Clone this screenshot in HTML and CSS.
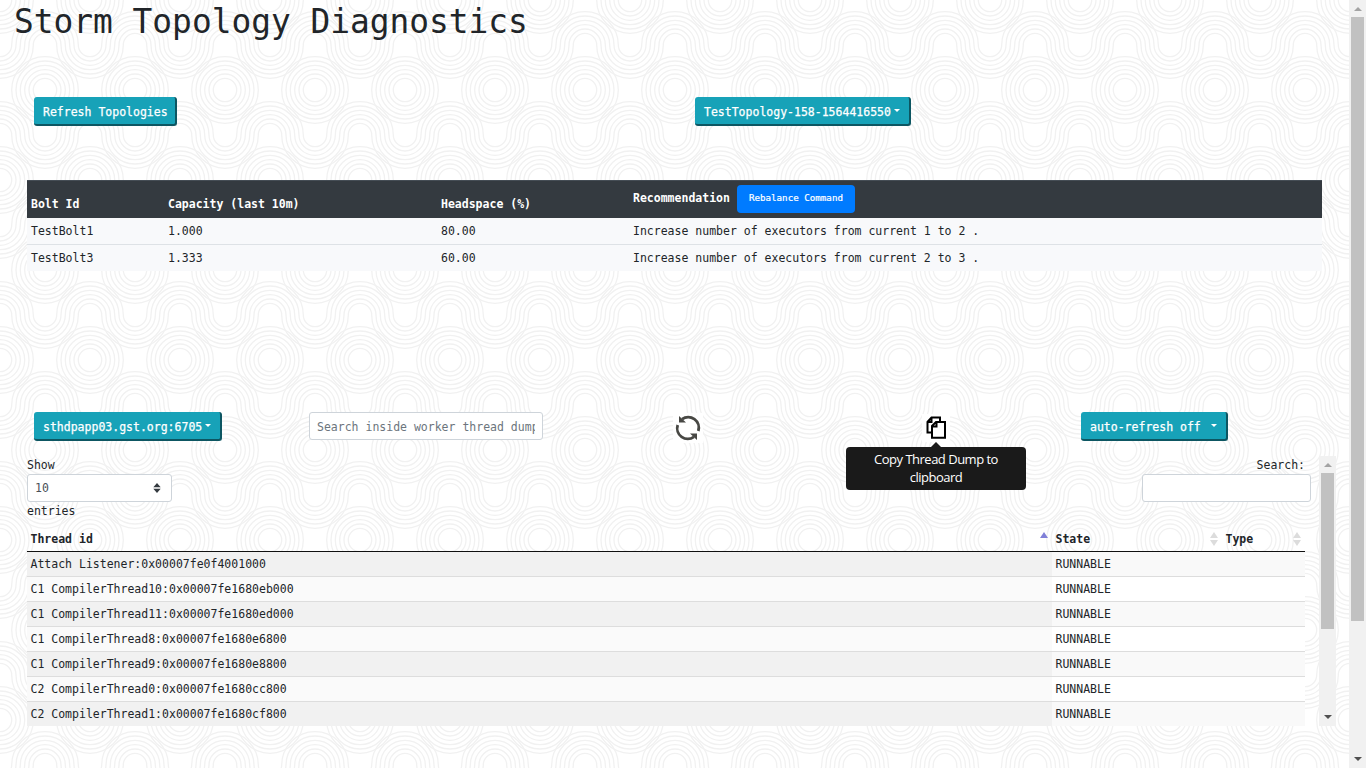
FILE: index.html
```html
<!DOCTYPE html>
<html lang="en">
<head>
<meta charset="utf-8">
<title>Storm Topology Diagnostics</title>
<link rel="stylesheet" href="styles.css">
</head>
<body>
<div class="page">
  <main class="content">
    <h1 class="title">Storm Topology Diagnostics</h1>
    <div class="topbar">
      <button class="btn-info refresh">Refresh Topologies</button>
      <button class="btn-info topology">TestTopology-158-1564416550<i class="caret"></i></button>
    </div>
    <table class="bolts">
      <colgroup><col class="b1"><col class="b2"><col class="b3"><col></colgroup>
      <thead><tr><th>Bolt Id</th><th>Capacity (last 10m)</th><th>Headspace (%)</th><th class="rec"><div class="rec-in"><span>Recommendation</span><button class="btn-primary">Rebalance Command</button></div></th></tr></thead>
      <tbody>
        <tr><td>TestBolt1</td><td>1.000</td><td>80.00</td><td>Increase number of executors from current 1 to 2 .</td></tr>
        <tr><td>TestBolt3</td><td>1.333</td><td>60.00</td><td>Increase number of executors from current 2 to 3 .</td></tr>
      </tbody>
    </table>
    <div class="toolbar">
      <div class="c1"><button class="btn-info worker">sthdpapp03.gst.org:6705<i class="caret"></i></button></div>
      <div class="c2"><div class="field search-dump"><span>Search inside worker thread dump</span></div></div>
      <div class="c3"><svg class="icon" width="30" height="30" viewBox="0 0 30 30"><rect width="30" height="30" fill="#fff"/><g fill="none" stroke="#484844" stroke-width="2.8"><path d="M9 6.2A10.6 10.6 0 0 1 25.3 18"/><path d="M21 23.8A10.6 10.6 0 0 1 4.7 12"/></g><path d="M6 3V9.6H13zM24 27V20.4H17z" fill="#484844"/></svg></div>
      <div class="c4"><svg class="icon" width="28" height="28" viewBox="0 0 28 28"><rect width="28" height="28" fill="#fff"/><g fill="#fff" stroke="#000" stroke-width="2"><path d="M9.5 3.5H18V18.5H5.5V8zM9.5 3.5V8H5.5"/><path d="M14 8H23V23.8H10V12zM14.5 8V12.5H10"/></g></svg>
        <div class="tooltip">Copy Thread Dump to clipboard</div></div>
      <div class="c5"><button class="btn-info auto">auto-refresh off<i class="caret"></i></button></div>
    </div>
    <div class="pane">
      <div class="pane-body">
        <div class="controls">
          <div class="length"><span>Show</span><div class="field select"><span>10</span><svg width="8" height="10" viewBox="0 0 8 10"><path d="M4 0L7.7 4.2H.3zM4 10L.3 5.8H7.7z" fill="#343a40"/></svg></div><span>entries</span></div>
          <div class="filter"><span>Search:</span><div class="field"></div></div>
        </div>
        <table class="threads">
          <colgroup><col class="t1"><col class="t2"><col></colgroup>
          <thead><tr><th><div class="h">Thread id<i class="sort asc"></i></div></th><th><div class="h">State<i class="sort"></i></div></th><th><div class="h">Type<i class="sort"></i></div></th></tr></thead>
          <tbody>
            <tr><td>Attach Listener:0x00007fe0f4001000</td><td>RUNNABLE</td><td></td></tr>
            <tr><td>C1 CompilerThread10:0x00007fe1680eb000</td><td>RUNNABLE</td><td></td></tr>
            <tr><td>C1 CompilerThread11:0x00007fe1680ed000</td><td>RUNNABLE</td><td></td></tr>
            <tr><td>C1 CompilerThread8:0x00007fe1680e6800</td><td>RUNNABLE</td><td></td></tr>
            <tr><td>C1 CompilerThread9:0x00007fe1680e8800</td><td>RUNNABLE</td><td></td></tr>
            <tr><td>C2 CompilerThread0:0x00007fe1680cc800</td><td>RUNNABLE</td><td></td></tr>
            <tr><td>C2 CompilerThread1:0x00007fe1680cf800</td><td>RUNNABLE</td><td></td></tr>
          </tbody>
        </table>
      </div>
      <div class="scroll"><i class="up"></i><div class="thumb inner"></div><i class="down"></i></div>
    </div>
  </main>
  <div class="scroll"><i class="up"></i><div class="thumb outer"></div><i class="down"></i></div>
</div>
</body>
</html>
```
FILE: styles.css
```css
*{box-sizing:border-box}
body{margin:0;overflow:hidden;color:#212529;font:11.51px/19px "DejaVu Sans Mono",monospace;
  background:#fff url("data:image/svg+xml,%3Csvg xmlns='http://www.w3.org/2000/svg' xmlns:xlink='http://www.w3.org/1999/xlink' width='90' height='180' fill='none' stroke='%23f1f1f1' stroke-width='1.3'%3E%3Cdefs%3E%3Cg id='c'%3E%3Ccircle r='11.7'/%3E%3Ccircle r='16'/%3E%3Ccircle r='20.3'/%3E%3Ccircle r='24.7'/%3E%3Ccircle r='29'/%3E%3Ccircle r='33.3'/%3E%3C/g%3E%3Cg id='a'%3E%3Cpath d='M-11.7 0a11.7 11.7 0 0 1 23.4 0M-16 0a16 16 0 0 1 32 0M-20.3 0a20.3 20.3 0 0 1 40.6 0M-24.7 0a24.7 24.7 0 0 1 49.4 0M-29 0a29 29 0 0 1 58 0M-33.3 0a33.3 33.3 0 0 1 66.6 0'/%3E%3C/g%3E%3Cg id='u'%3E%3Cuse xlink:href='%23a' transform='scale(1,-1)'/%3E%3C/g%3E%3C/defs%3E%3Cuse xlink:href='%23c'/%3E%3Cuse xlink:href='%23c' x='90'/%3E%3Cuse xlink:href='%23c' y='180'/%3E%3Cuse xlink:href='%23c' x='90' y='180'/%3E%3Cuse xlink:href='%23c' x='45' y='90'/%3E%3Cuse xlink:href='%23a' x='45' y='45'/%3E%3Cuse xlink:href='%23u' y='45'/%3E%3Cuse xlink:href='%23u' x='90' y='45'/%3E%3Cuse xlink:href='%23u' x='45' y='135'/%3E%3Cuse xlink:href='%23a' y='135'/%3E%3Cuse xlink:href='%23a' x='90' y='135'/%3E%3C/svg%3E")}
.page{display:flex;width:1366px;height:768px}
.content{width:1349px;height:768px}
.title{margin:0;padding-left:14px;height:97px;font-size:32.85px;line-height:45px;font-weight:400;white-space:pre}
button{font:inherit;margin:0;border:0}
.btn-info{display:flex;align-items:center;height:29px;padding:3px 0 0 9px;border-radius:3px;background:#17a2b8;color:#fff;border-right:2px solid #0d5662;border-bottom:2px solid #0d5662;font-weight:400;white-space:pre;-webkit-text-stroke:.25px #fff}
.caret{width:0;margin:-3px 0 0 3px;border:3.5px solid transparent;border-top-color:#fff;border-bottom:0}
.topbar{display:flex;height:83px;padding-left:34px}
.refresh{width:143px}
.topology{width:216px;margin-left:518px}
table{border-collapse:separate;border-spacing:0;table-layout:fixed}
th{text-align:left;font-weight:700}
.bolts{width:1295px;margin-left:27px}
.b1{width:137px}.b2{width:273px}.b3{width:192px}
.bolts th{height:38px;padding:10px 4px 0;background:#343a40;color:#fff;border-top:1px solid #454d55}
.bolts th.rec{padding-top:0}
.rec-in{display:flex;gap:7px;height:29px;line-height:27px}
.btn-primary{width:118px;height:28px;border-radius:4px;background:#007bff;color:#fff;font-size:9.2px;font-weight:400;-webkit-text-stroke:.2px #fff;line-height:25px;padding:0 0 3px;white-space:nowrap}
.bolts td{height:26px;padding:0 4px;background:#f8f9fb;line-height:26px}
.bolts tr+tr td{height:27px;border-top:1px solid #dee2e6}
.toolbar{display:flex;height:44px;margin-top:141px;padding-left:34px}
.c1{width:275px}.c2{width:364px}.c3{width:249px}.c4{width:159px;position:relative}
.worker{width:188px}.auto{width:147px}
.auto .caret{margin-left:10px}
.field{height:28px;border:1px solid #ced4da;border-radius:3px;background:#fff;color:#495057}
.search-dump{width:234px;padding:0 7px;line-height:28px;color:#6c757d}
.search-dump span{display:block;overflow:hidden;white-space:nowrap}
.icon{display:block}
.c3 .icon{margin-top:1px}
.c4 .icon{margin-top:2px}
.tooltip{position:absolute;left:-76px;top:35px;width:180px;height:43px;padding:3px 22px 0;border-radius:4px;background:#1a1a1a;color:#fff;font:13px/18px "Open Sans",sans-serif;letter-spacing:-.5px;text-align:center}
.tooltip::before{content:"";position:absolute;left:85px;top:-5px;border:5px solid transparent;border-top:0;border-bottom-color:#1a1a1a}
.pane{display:flex;height:270px;padding-left:27px}
.pane-body{width:1292px;height:270px;overflow:hidden}
.controls{display:flex;justify-content:space-between;height:70px;padding-right:8px;line-height:18px}
.length,.filter{display:flex;flex-direction:column}
.filter .field{width:169px}
.filter span{text-align:right;padding-right:6px}
.select{display:flex;align-items:center;justify-content:space-between;width:145px;padding:0 10px 0 7px}
.threads{width:1278px}
.t1{width:1025px}.t2{width:170px}
.threads th{height:26px;padding:1px 4px 0 3.5px;border-bottom:1px solid #111}
.h{display:flex;justify-content:space-between;align-items:center}
.sort{width:8px;height:14px;position:relative}
.sort::before,.sort::after{content:"";position:absolute;left:0;border:4px solid transparent}
.sort::before{top:0;border-top:0;border-bottom:6px solid #dcdcdc}
.sort::after{bottom:0;border-bottom:0;border-top:6px solid #dcdcdc}
.sort.asc::before{border-bottom-color:#8080d8}
.sort.asc::after{display:none}
.threads td{height:25px;padding:0 4px 0 3.5px;line-height:23px;border-top:1px solid #ddd;background:#fff}
.threads td:first-child{background:#fafafa}
.threads tr:nth-child(odd) td{background:#f9f9f9}
.threads tr:nth-child(odd) td:first-child{background:#f1f1f1}
.threads tbody tr:first-child td{height:24px;border-top:0}
.scroll{display:flex;flex-direction:column;align-items:center;width:17px;height:100%;background:#f1f1f1}
.thumb{width:13px;background:#c1c1c1}
.inner{height:156px}.outer{height:604px}
.up,.down{width:0;border:4px solid transparent}
.up{border-top:0;border-bottom-color:#a3a3a3;margin:7px 0 6px}
.down{border-bottom:0;border-top-color:#505050;margin:auto 0 7px}
```
